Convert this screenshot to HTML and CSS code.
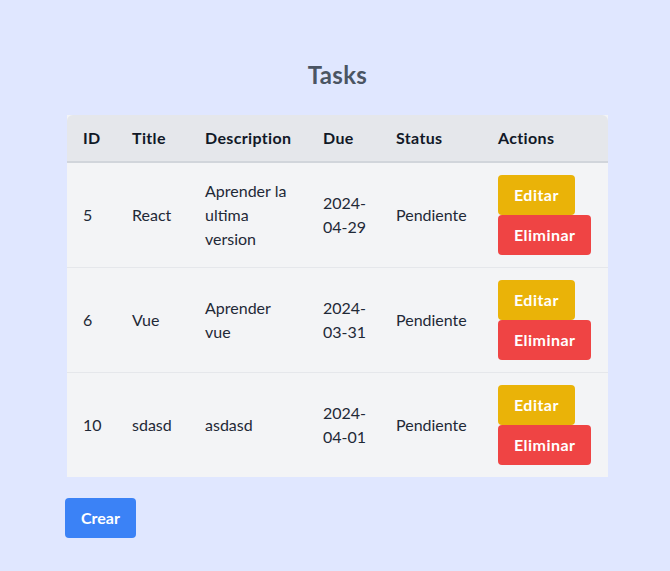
FILE: index.html
```html
<!DOCTYPE html>
<html lang="es">
<head>
<meta charset="utf-8">
<title>Tasks</title>
<link rel="stylesheet" href="styles.css">
</head>
<body>
<main class="page">
  <h1 class="title">Tasks</h1>
  <table class="tasks">
    <colgroup>
      <col class="c-id"><col class="c-title"><col class="c-desc"><col class="c-due"><col class="c-status"><col class="c-actions">
    </colgroup>
    <thead>
      <tr><th>ID</th><th>Title</th><th>Description</th><th>Due</th><th>Status</th><th>Actions</th></tr>
    </thead>
    <tbody>
      <tr>
        <td>5</td><td>React</td><td>Aprender la ultima version</td><td class="due">2024-<br>04-29</td><td>Pendiente</td>
        <td><div class="actions"><button class="btn btn-edit">Editar</button><button class="btn btn-del">Eliminar</button></div></td>
      </tr>
      <tr>
        <td>6</td><td>Vue</td><td>Aprender vue</td><td class="due">2024-<br>03-31</td><td>Pendiente</td>
        <td><div class="actions"><button class="btn btn-edit">Editar</button><button class="btn btn-del">Eliminar</button></div></td>
      </tr>
      <tr>
        <td>10</td><td>sdasd</td><td>asdasd</td><td class="due">2024-<br>04-01</td><td>Pendiente</td>
        <td><div class="actions"><button class="btn btn-edit">Editar</button><button class="btn btn-del">Eliminar</button></div></td>
      </tr>
    </tbody>
  </table>
  <button class="btn btn-create">Crear</button>
</main>
</body>
</html>
```
FILE: styles.css
```css
* { box-sizing: border-box; }
html, body { margin: 0; padding: 0; }
body {
  background: #e0e7ff;
  font-family: "Lato", "Open Sans", sans-serif;
  font-size: 16px;
  line-height: 24px;
  color: #1f2937;
  min-height: 571px;
}
.page {
  padding: 59px 0 0 65px;
  width: 610px;
}
.title {
  margin: 0 0 24px 2px;
  width: 541px;
  text-align: center;
  font-size: 24px;
  line-height: 32px;
  font-weight: 700;
  color: #4b5563;
  letter-spacing: 0.3px;
}
.tasks {
  margin-left: 2px;
  width: 541px;
  table-layout: fixed;
  border-collapse: separate;
  border-spacing: 0;
  background: #f3f4f6;
}
.c-id { width: 49px; }
.c-title { width: 73px; }
.c-desc { width: 118px; }
.c-due { width: 73px; }
.c-status { width: 102px; }
.c-actions { width: 126px; }
.tasks th {
  background: #e5e7eb;
  text-align: left;
  font-weight: 700;
  padding: 11px 16px;
  border-bottom: 2px solid #d1d5db;
  color: #111827;
  letter-spacing: 0.35px;
  white-space: nowrap;
}
.tasks th:first-child { border-top-left-radius: 6px; }
.tasks th:last-child { border-top-right-radius: 6px; }
.tasks td {
  padding: 12px 16px;
  vertical-align: middle;
  border-bottom: 1px solid #e5e7eb;
  color: #1f2937;
}
.tasks td.due { white-space: nowrap; }
.tasks tbody tr:last-child td { border-bottom: none; }
.actions {
  display: flex;
  flex-direction: column;
  align-items: flex-start;
}
.btn {
  border: none;
  border-radius: 4px;
  padding: 8px 16px;
  font-family: inherit;
  font-size: 16px;
  line-height: 24px;
  font-weight: 700;
  color: #fff;
  cursor: pointer;
  white-space: nowrap;
  letter-spacing: 0.45px;
}
.btn-edit { background: #eab308; }
.btn-del { background: #ef4444; }
.btn-create {
  background: #3b82f6;
  margin-top: 21px;
  letter-spacing: 0;
}
```
